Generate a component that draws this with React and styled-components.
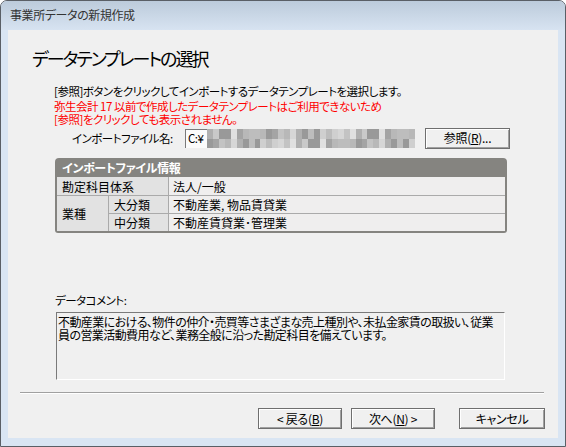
import React from "react";
import styled, { createGlobalStyle } from "styled-components";

const Global = createGlobalStyle`
  html, body { margin: 0; padding: 0; background: #ffffff; }
  body { font-family: "Noto Sans CJK JP", "Noto Sans", sans-serif; }
  * { box-sizing: border-box; }
`;

const Window = styled.div`
  width: 566px;
  height: 447px;
  border: 1px solid #5a5f66;
  border-radius: 7px 7px 0 0;
  background: #d9e5f3;
  display: flex;
  flex-direction: column;
  overflow: hidden;
  font-size: 11.5px;
  letter-spacing: -0.5px;
  font-feature-settings: "palt";
  color: #000;
`;

const TitleBar = styled.div`
  height: 29px;
  flex: none;
  background: linear-gradient(#bccbdb, #d7e3f1);
  display: flex;
  align-items: center;
  padding: 0 0 2px 9px;
  color: #333;
  font-size: 12px;
  letter-spacing: -0.4px;
  line-height: 1;
`;

const Client = styled.div`
  flex: none;
  height: 408px;
  margin: 0 7px;
  background: #f0f0f0;
  display: flex;
  flex-direction: column;
  padding: 17px 0 0 0;
`;

const Heading = styled.h1`
  margin: 0 0 0 24px;
  font-size: 18px;
  letter-spacing: -2px;
  font-weight: normal;
  line-height: 22px;
  height: 22px;
`;

const Description = styled.div`
  margin: 16px 0 0 46px;
  display: flex;
  flex-direction: column;
`;

const Line = styled.div`
  color: ${(p) => (p.$red ? "#ff0000" : "#000")};
  white-space: nowrap;
  line-height: 13px;
  height: 13px;
  margin-top: ${(p) => p.$gap || 0}px;
`;

const FileRow = styled.div`
  display: flex;
  align-items: center;
  margin: 2px 0 0 0;
  height: 20px;
`;

const FileLabel = styled.span`
  width: 177px;
  padding-left: 64px;
  white-space: nowrap;
  line-height: 13px;
`;

const FileBox = styled.div`
  width: 230px;
  height: 19px;
  border-top: 1px solid #7a7a7a;
  border-left: 1px solid #7a7a7a;
  background: #fbfbfb;
  display: flex;
  align-items: center;
  padding-left: 2px;
  position: relative;
  line-height: 13px;
`;

const Mosaic = styled.div`
  position: absolute;
  left: 21px;
  top: -1px;
  right: 0;
  height: 19px;
  display: grid;
  grid-template-columns: repeat(35, 1fr);
  grid-template-rows: 10px 9px;
`;

const Cell = styled.span`
  background: ${(p) => p.$c};
`;

const Button = styled.button`
  width: ${(p) => p.$w || 84}px;
  height: 21px;
  border: 1px solid #6f6f6f;
  background: #f0f0f0;
  box-shadow: inset 1px 1px #ffffff, inset -1px -1px #a0a0a0;
  font-family: inherit;
  font-size: 12px;
  letter-spacing: -0.3px;
  font-feature-settings: "palt";
  color: #000;
  padding: 0;
  display: flex;
  align-items: center;
  justify-content: center;
  line-height: 1;
  u { text-underline-offset: 1px; }
`;

const BrowseButton = styled(Button)`
  margin-left: 10px;
`;

const InfoPanel = styled.div`
  margin: 10px 0 0 47px;
  width: 452px;
  background: #858480;
  border-radius: 4px 4px 3px 3px;
  padding: 0 2px 2px 2px;
  font-size: 12px;
  letter-spacing: 0;
`;

const InfoHeader = styled.div`
  height: 19px;
  display: flex;
  align-items: center;
  padding-left: 5px;
  color: #fff;
  font-weight: bold;
  letter-spacing: -0.3px;
  line-height: 13px;
`;

const InfoGrid = styled.div`
  display: grid;
  grid-template-columns: 51px 59px 1fr;
  grid-template-rows: 18px 17px 17px;
  gap: 1px;
  background: #aaaaaa;
`;

const InfoCell = styled.div`
  background: ${(p) => (p.$label ? "#e2e2e2" : "#efeeee")};
  grid-column: ${(p) => p.$col || "auto"};
  grid-row: ${(p) => p.$row || "auto"};
  display: flex;
  align-items: center;
  padding-left: ${(p) => (p.$label ? 5 : 4)}px;
  white-space: nowrap;
  line-height: 13px;
`;

const CommentLabel = styled.div`
  margin: 61px 0 0 47px;
  line-height: 13px;
  height: 13px;
`;

const CommentBox = styled.div`
  margin: 5px 0 0 48px;
  width: 449px;
  height: 68px;
  border-top: 1px solid #7a7a7a;
  border-left: 1px solid #7a7a7a;
  border-right: 1px solid #ffffff;
  border-bottom: 1px solid #ffffff;
  background: #f0f0f0;
  padding: 2px 0 0 1px;
  font-size: 12px;
  letter-spacing: -0.58px;
  line-height: 13px;
  white-space: nowrap;
`;

const Separator = styled.div`
  margin: 12px 0 0 12px;
  width: 524px;
  height: 2px;
  border-top: 1px solid #a0a0a0;
  border-bottom: 1px solid #ffffff;
`;

const ButtonBar = styled.div`
  display: flex;
  margin: 14px 0 0 250px;
  gap: 9px;
`;

const CancelButton = styled(Button)`
  margin-left: 15px;
  width: 86px;
`;

const shades = ["#a4a4a4", "#b8b8b8", "#c9c9c9", "#d6d6d6", "#bdbdbd", "#999999", "#cfcfcf", "#e0e0e0", "#b0b0b0", "#c3c3c3"];

function mosaicCells() {
  const cells = [];
  let s = 7;
  for (let i = 0; i < 70; i++) {
    s = (s * 37 + 11) % 101;
    cells.push(shades[s % shades.length]);
  }
  return cells;
}

export default function App() {
  const cells = mosaicCells();
  return (
    <>
      <Global />
      <Window>
        <TitleBar>事業所データの新規作成</TitleBar>
        <Client>
          <Heading>データテンプレートの選択</Heading>
          <Description>
            <Line>[参照]ボタンをクリックしてインポートするデータテンプレートを選択します。</Line>
            <Line $red $gap={2}>弥生会計 17 以前で作成したデータテンプレートはご利用できないため</Line>
            <Line $red>[参照]をクリックしても表示されません。</Line>
          </Description>
          <FileRow>
            <FileLabel>インポートファイル名:</FileLabel>
            <FileBox>
              C:¥
              <Mosaic>
                {cells.map((c, i) => (
                  <Cell key={i} $c={c} />
                ))}
              </Mosaic>
            </FileBox>
            <BrowseButton $w={85}>
              参照(<u>R</u>)...
            </BrowseButton>
          </FileRow>
          <InfoPanel>
            <InfoHeader>インポートファイル情報</InfoHeader>
            <InfoGrid>
              <InfoCell $label $col="1 / 3">勘定科目体系</InfoCell>
              <InfoCell>法人/一般</InfoCell>
              <InfoCell $label $row="2 / 4" $col="1">業種</InfoCell>
              <InfoCell $label>大分類</InfoCell>
              <InfoCell>不動産業, 物品賃貸業</InfoCell>
              <InfoCell $label>中分類</InfoCell>
              <InfoCell>不動産賃貸業･管理業</InfoCell>
            </InfoGrid>
          </InfoPanel>
          <CommentLabel>データコメント:</CommentLabel>
          <CommentBox>
            不動産業における、物件の仲介・売買等さまざまな売上種別や、未払金家賃の取扱い、従業
            <br />
            員の営業活動費用など、業務全般に沿った勘定科目を備えています。
          </CommentBox>
          <Separator />
          <ButtonBar>
            <Button>
              &lt; 戻る(<u>B</u>)
            </Button>
            <Button>
              次へ(<u>N</u>) &gt;
            </Button>
            <CancelButton>キャンセル</CancelButton>
          </ButtonBar>
        </Client>
      </Window>
    </>
  );
}
